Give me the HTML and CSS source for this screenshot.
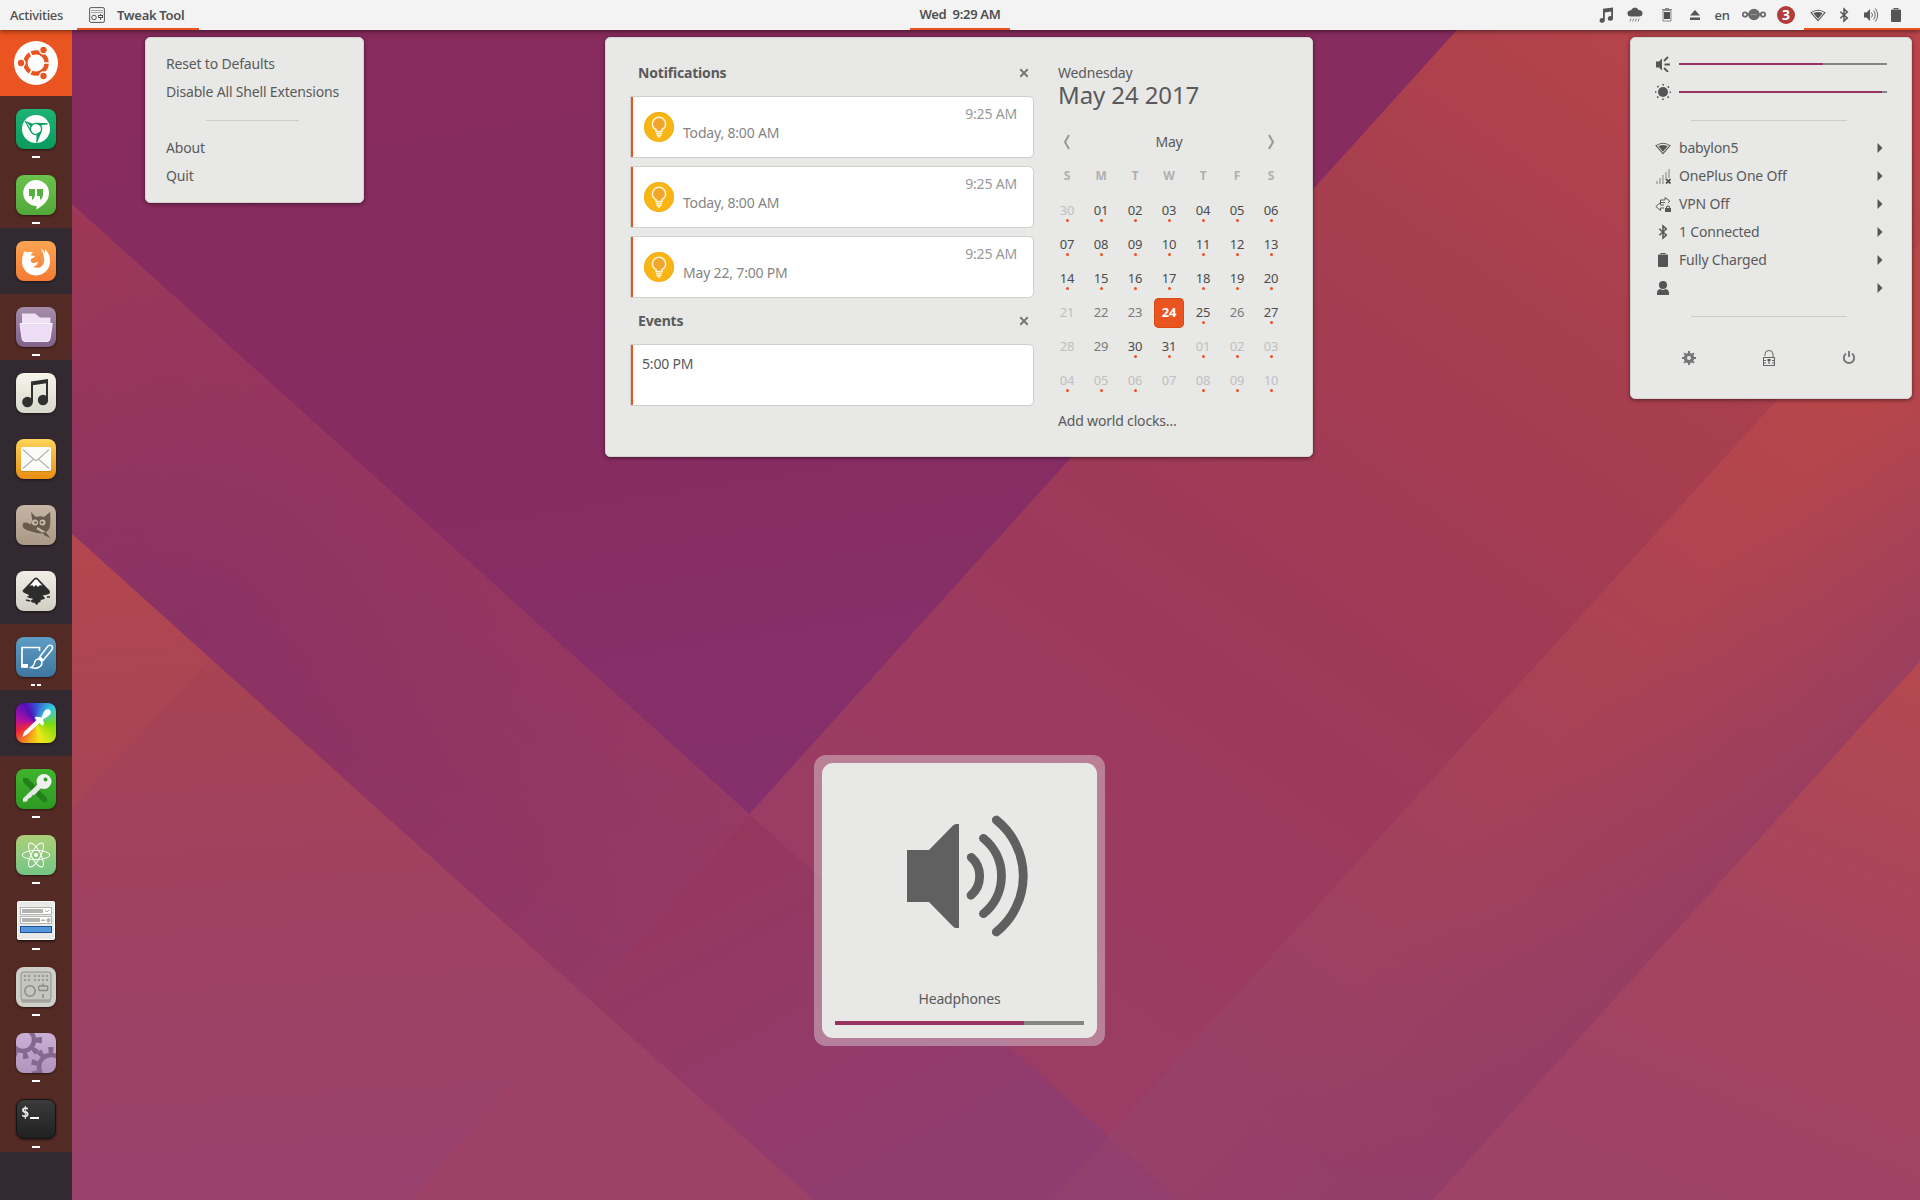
FILE: index.html
```html
<!DOCTYPE html>
<html lang="en">
<head>
<meta charset="utf-8">
<title>Desktop</title>
<link rel="stylesheet" href="styles.css">
</head>
<body>
<svg width="0" height="0" class="defs">
  <defs>
    <symbol id="bulb" viewBox="0 0 30 30"><circle cx="15" cy="15" r="15" fill="#f9b514"/><circle cx="15" cy="15" r="14.6" fill="none" stroke="#e9a91c" stroke-width=".7"/><path d="M12 19.500v-2c-2-1.200-3.600-3-3.600-5.600a6.600 6.600 0 0 1 13.200 0c0 2.600-1.600 4.400-3.600 5.600v2z" fill="#f2a52c" stroke="#fff6dc" stroke-width="1.500"/><path d="M12 21.500h6M12.500 23.500h5M14 25h2" stroke="#fff6dc" stroke-width="1.300" fill="none"/></symbol>
    <symbol id="wifi" viewBox="0 0 16 16"><path d="M1 5.600Q8 .8 15 5.600L8 13.700z" fill="none" stroke="#5c5c5c" stroke-width="1.100"/><path d="M3.400 6.300q4.600-2.600 9.200 0L8 11.800z" fill="#555"/></symbol>
    <symbol id="bt" viewBox="0 0 16 16"><path d="M4.300 4.700l7 6.200L8 14V2l3.300 3.100-7 6.200" fill="none" stroke="#555" stroke-width="1.500"/></symbol>
    <symbol id="battery" viewBox="0 0 16 16"><path d="M3 3.600q0-1 1-1h8q1 0 1 1v10.400q0 1-1 1H4q-1 0-1-1zM5.500 1h5v1h-5z" fill="#555"/></symbol>
    <symbol id="arrow" viewBox="0 0 6 10"><path d="M.5 0L5.500 5l-5 5z" fill="#555"/></symbol>
    <symbol id="cross" viewBox="0 0 10 10"><path d="M1.300 1.300l7.400 7.400m0-7.400L1.300 8.700" stroke="#777" stroke-width="2"/></symbol>
    <symbol id="note" viewBox="0 0 16 16"><path d="M5 1.800L15 .5v11a2.600 2.300 0 1 1-1.800-2.200V4.500L6.800 5.400v8a2.600 2.300 0 1 1-1.800-2.200z" fill="#555"/></symbol>
  </defs>
</svg>

<svg class="wallpaper" viewBox="0 0 1568 980" preserveAspectRatio="none">
  <defs>
    <linearGradient id="w1" gradientUnits="userSpaceOnUse" x1="500" y1="24" x2="600" y2="665"><stop offset="0" stop-color="#872c5d"/><stop offset=".5" stop-color="#872c61"/><stop offset="1" stop-color="#85306c"/></linearGradient>
    <linearGradient id="w2" gradientUnits="userSpaceOnUse" x1="360" y1="400" x2="225" y2="560"><stop offset="0" stop-color="#96365f"/><stop offset="1" stop-color="#8b3264"/></linearGradient>
    <linearGradient id="w2b" gradientUnits="userSpaceOnUse" x1="59" y1="200" x2="550" y2="740"><stop offset="0" stop-color="#a03a52" stop-opacity=".7"/><stop offset=".4" stop-color="#95355e" stop-opacity="0"/><stop offset="1" stop-color="#983d66" stop-opacity=".6"/></linearGradient>
    <linearGradient id="w3" gradientUnits="userSpaceOnUse" x1="70" y1="450" x2="90" y2="640"><stop offset="0" stop-color="#b3464e"/><stop offset="1" stop-color="#a74456"/></linearGradient>
    <linearGradient id="w4" gradientUnits="userSpaceOnUse" x1="170" y1="540" x2="200" y2="980"><stop offset="0" stop-color="#a74352"/><stop offset=".4" stop-color="#a04160"/><stop offset="1" stop-color="#98416c"/></linearGradient>
    <linearGradient id="w5" gradientUnits="userSpaceOnUse" x1="610" y1="665" x2="780" y2="980"><stop offset="0" stop-color="#95365e"/><stop offset=".6" stop-color="#933b6a"/><stop offset="1" stop-color="#8f3c70"/></linearGradient>
    <linearGradient id="w7" gradientUnits="userSpaceOnUse" x1="1430" y1="24" x2="860" y2="820"><stop offset="0" stop-color="#b9454a"/><stop offset=".28" stop-color="#a83f4e"/><stop offset=".6" stop-color="#9e3958"/><stop offset="1" stop-color="#9a3c64"/></linearGradient>
    <linearGradient id="w8" gradientUnits="userSpaceOnUse" x1="1568" y1="300" x2="1080" y2="960"><stop offset="0" stop-color="#ba4749"/><stop offset=".45" stop-color="#aa4254"/><stop offset="1" stop-color="#974068"/></linearGradient>
    <linearGradient id="w8b" gradientUnits="userSpaceOnUse" x1="1240" y1="641" x2="1370" y2="759"><stop offset="0" stop-color="#8e3b68" stop-opacity="0"/><stop offset="1" stop-color="#8e3b68" stop-opacity=".6"/></linearGradient>
    <linearGradient id="w9" gradientUnits="userSpaceOnUse" x1="1568" y1="560" x2="1400" y2="980"><stop offset="0" stop-color="#b34850"/><stop offset=".5" stop-color="#a6445e"/><stop offset="1" stop-color="#9e4266"/></linearGradient>
  </defs>
  <path d="M0 0H1568V980H0z" fill="#983b66"/>
  <path d="M0 0H1212L612 665L0 114z" fill="url(#w1)"/>
  <path d="M1212 0H1568V198L905 928L612 665z" fill="url(#w7)"/>
  <path d="M0 114L612 665L480 815L0 383z" fill="url(#w2)"/>
  <path d="M0 114L612 665L480 815L0 383z" fill="url(#w2b)"/>
  <path d="M0 383L172 538L0 724z" fill="url(#w3)"/>
  <path d="M172 538L480 815L335 980H0V724z" fill="url(#w4)"/>
  <path d="M480 815L665 980H335z" fill="#9e4167"/>
  <path d="M612 665L963 980H665L480 815z" fill="url(#w5)"/>
  <path d="M1568 198V540L1170 980H860L905 928z" fill="url(#w8)"/>
  <path d="M1568 198V540L1170 980H963L905 928z" fill="url(#w8b)"/>
  <path d="M905 928L963 980H858z" fill="#923f6e"/>
  <path d="M1568 540V980H1170z" fill="url(#w9)"/>
</svg>

<header class="topbar">
  <div class="activities">Activities</div>
  <div class="app-menu active">
    <svg width="16" height="16" viewBox="0 0 16 16" fill="none" stroke="#555"><rect x=".6" y=".6" width="14.800" height="14.800" rx="1.500"/><path d="M2.500 3.500h11M2.500 5.500h11" stroke-dasharray="1 1"/><circle cx="5" cy="10.500" r="2.300"/><rect x="9.500" y="8.500" width="4" height="2"/><path d="M11.500 7v1.500m0 2.500v2"/></svg>
    <span>Tweak Tool</span>
  </div>
  <div class="clock active">Wed&nbsp; 9:29 AM</div>
  <div class="tray">
    <span class="w28"><svg width="16" height="16"><use href="#note"/></svg></span>
    <span class="w30"><svg width="16" height="16" viewBox="0 0 16 16"><path d="M3.200 9.500a3 3 0 0 1-.5-5.900 2.500 2.500 0 0 1 1.600-.6A3.900 3.900 0 0 1 11.600 3 3.300 3.300 0 0 1 12.800 9.500z" fill="#555"/><path d="M4 11.500l-1 3M6.700 11.500l-1 3M9.400 11.500l-1 3M12.100 11.500l-1 3" stroke="#777" stroke-width=".9"/></svg></span>
    <span class="w34"><svg width="16" height="16" viewBox="0 0 16 16"><path d="M5 5h6v7H5z" fill="#505050"/><path d="M4 14V3.500h8V14z" fill="none" stroke="#888"/><path d="M3 2.500h10M6 1.500h4" stroke="#888"/></svg></span>
    <span class="w22"><svg width="16" height="16" viewBox="0 0 16 16"><path d="M8 3l5 5.500H3zM3 10.500h10v2.500H3z" fill="#555"/></svg></span>
    <span class="w32 lang">en</span>
    <span class="w32"><svg width="24" height="16" viewBox="0 0 24 16" fill="none" stroke="#6b6b6b"><circle cx="3" cy="7.500" r="2.200" stroke-width="1.800"/><circle cx="21" cy="7.500" r="2.200" stroke-width="1.800"/><circle cx="12" cy="7.500" r="5.800" fill="#6b6b6b" stroke="none"/><path d="M5 7.500h2m10 0h2" stroke-width="2"/><path d="M9 7.500h6" stroke="#aaa" stroke-dasharray="1.500 .7"/></svg></span>
    <span class="w32"><b class="badge">3</b></span>
    <div class="system active">
      <span class="w28"><svg width="16" height="16"><use href="#wifi"/></svg></span>
      <span class="w24"><svg width="16" height="16"><use href="#bt"/></svg></span>
      <span class="w30"><svg width="16" height="16" viewBox="0 0 16 16"><path d="M1 5.500h2.500L7 2v12L3.500 10.500H1z" fill="#555"/><path d="M8.500 5.500q2 2.500 0 5M10.500 3.500q3.400 4.500 0 9M12.300 1.500q4.800 6.500 0 13" fill="none" stroke="#666"/></svg></span>
      <span class="w20"><svg width="16" height="16"><use href="#battery"/></svg></span>
    </div>
  </div>
</header>

<nav class="dock">
  <div class="tile home"><svg width="44" height="44" viewBox="-22 -22 44 44"><circle r="22" fill="#fff"/><circle r="10.600" fill="none" stroke="#e95420" stroke-width="4.400"/><path d="M0 0H14M0 0L-7.500-13M0 0L-7.500 13" stroke="#fff" stroke-width="1.600"/><circle r="8.200" fill="#fff"/><g fill="#e95420" stroke="#fff" stroke-width="1.500"><circle cx="-15" r="3.900"/><circle cx="7.500" cy="-13" r="3.900"/><circle cx="7.500" cy="13" r="3.900"/></g></svg></div>

  <div class="tile on"><svg viewBox="0 0 40 40"><defs><linearGradient id="g1" x2="0" y2="1"><stop stop-color="#1db375"/><stop offset="1" stop-color="#099a5d"/></linearGradient></defs><rect width="40" height="40" rx="8" fill="url(#g1)"/><circle cx="20" cy="20" r="14" fill="#fff"/><g stroke="#0b9f62" stroke-width="1.300" fill="none"><circle cx="20" cy="20" r="5.600"/><path d="M20 14.400L31.500 15M15 22.500L9.200 12M25 22.500L20.500 33.500"/></g><path d="M9.500 12l8 3-2.500 3zM20 14.200l11 .5-7 2zM25 22l-4.500 11 0-8z" fill="#0b9f62"/></svg><i></i></div>

  <div class="tile on"><svg viewBox="0 0 40 40"><defs><linearGradient id="g2" x2="0" y2="1"><stop stop-color="#6ac24c"/><stop offset="1" stop-color="#52a93a"/></linearGradient></defs><rect width="40" height="40" rx="8" fill="url(#g2)"/><path d="M20 5a13 13 0 0 1 13 13c0 8-6 12.500-12.500 16.500V31A13 13 0 1 1 20 5z" fill="#fff"/><path d="M13 14h6v6q0 3-3 5v-4h-3zm8 0h6v6q0 3-3 5v-4h-3z" fill="#58b040"/></svg><i></i></div>

  <div class="tile"><svg viewBox="0 0 40 40"><defs><linearGradient id="g3" x2="0" y2="1"><stop stop-color="#fba552"/><stop offset="1" stop-color="#f47a32"/></linearGradient></defs><rect width="40" height="40" rx="8" fill="url(#g3)"/><path d="M7.500 12.500L8.500 10l2.500 1.500q3-1.500 6 0-2 1-2 3l4 .5q-1 2-4 3-1 4 3 4l4-1q-1 4-5 5 9 3 11-5 1-6-3-13.500 3 2 4 5V8q5 5 5 12a14 14 0 0 1-28 1q0-5 1.500-8.500z" fill="#fff"/></svg></div>

  <div class="tile on"><svg viewBox="0 0 40 40"><defs><linearGradient id="g4" x2="0" y2="1"><stop stop-color="#a58daa"/><stop offset="1" stop-color="#80628a"/></linearGradient></defs><rect width="40" height="40" rx="8" fill="url(#g4)"/><path d="M6 6.500h13l5 4h10.500V20H6z" fill="#f0e0f6"/><path d="M4 16.500h32.300l-2.200 15q-.4 3-3 3H9q-2.500 0-3-3z" fill="#ecdcf5" stroke="#fff" stroke-width=".8"/></svg><i></i></div>

  <div class="tile"><svg viewBox="0 0 40 40"><defs><linearGradient id="g5" x2="0" y2="1"><stop stop-color="#f5f5ea"/><stop offset="1" stop-color="#d8d8cb"/></linearGradient></defs><rect width="40" height="40" rx="8" fill="url(#g5)"/><path d="M16 9v20M31 7v20" stroke="#30302e" stroke-width="2" fill="none"/><path d="M15 8.500L32 6v4l-17 2.500z" fill="#30302e"/><circle cx="11.500" cy="29" r="5.300" fill="#30302e"/><circle cx="27" cy="27" r="5.200" fill="#30302e"/></svg></div>

  <div class="tile"><svg viewBox="0 0 40 40"><defs><linearGradient id="g6" x2="0" y2="1"><stop stop-color="#ffd45a"/><stop offset="1" stop-color="#e88e12"/></linearGradient></defs><rect width="40" height="40" rx="8" fill="url(#g6)"/><rect x="5" y="9" width="30" height="24" rx="1.500" fill="#b8760f" opacity=".5"/><rect x="5" y="8" width="30" height="24" rx="1.500" fill="#fbfbf9"/><path d="M7 10.500l11 10q2 2 4 0l11-10M7 29.500l10-9m6 0l10 9" fill="none" stroke="#b3b3ad" stroke-width="1.100"/></svg></div>

  <div class="tile"><svg viewBox="0 0 40 40"><defs><linearGradient id="g7" x2="0" y2="1"><stop stop-color="#c6b5a4"/><stop offset="1" stop-color="#a89885"/></linearGradient></defs><rect width="40" height="40" rx="8" fill="url(#g7)"/><path d="M15 7l5 5q4-1.500 8 0l6-5q1 10-.5 16-2 5-8 5.500-5 0-10-2-6-1.500-8.500-4-1.500-5 2.500-5 3 0 4.500 2 3-2 2-6z" fill="#685b4e"/><circle cx="19" cy="17.500" r="3" fill="#c9bcad"/><circle cx="26.500" cy="17.500" r="3" fill="#c9bcad"/><circle cx="19.500" cy="17.500" r="1.300" fill="#685b4e"/><circle cx="26" cy="17.500" r="1.300" fill="#685b4e"/><path d="M21 23l8 5" stroke="#c2b3a2" stroke-width="2.500"/><path d="M26 27l4 .5 4.500 5.500-6-2.500z" fill="#685b4e"/></svg></div>

  <div class="tile"><svg viewBox="0 0 40 40"><defs><linearGradient id="g8" x2="0" y2="1"><stop stop-color="#f1eee7"/><stop offset="1" stop-color="#d1cec4"/></linearGradient></defs><rect width="40" height="40" rx="8" fill="url(#g8)"/><path d="M18 7.500q2-2 4 0L33.500 19.500q1.500 3-2 4l-5 1q3 2 2 3.500l-4 1q1 2-2 2.500l-1 2q-2 1-2.500-1.500-4-.5-4.500-2.500 3-1 2-2-5-.5-5.500-2 4-1 0-2.500-4.500-1.500-4.500-3.500z" fill="#2d2d2d"/><path d="M19 8.700q1-1 2 0l5.500 6-2.500-.7-2 2-2-2-2.500 2-1-2-3 1z" fill="#fff"/><path d="M10 29l4 1M31 26h3" stroke="#2d2d2d" stroke-width="1.500"/></svg></div>

  <div class="tile on two"><svg viewBox="0 0 40 40"><defs><linearGradient id="g9" x2="0" y2="1"><stop stop-color="#5e9dc6"/><stop offset="1" stop-color="#3f769f"/></linearGradient></defs><rect width="40" height="40" rx="8" fill="url(#g9)"/><path d="M23.500 14v-3.500H6V29h6" fill="none" stroke="#fff" stroke-width="1.700"/><path d="M5.200 27H12v3.800H5.200z" fill="#fff"/><path d="M24 19.500L32 9q2-1.500 4 0 1 1.500 0 3.500L27 23.500zM22.500 20.500l4 3.800M23 22q-4 0-4.500 4-.5 3-3.500 4.500 5 1.500 8.500-.5 3.500-2.500 2-6z" fill="none" stroke="#fff" stroke-width="1.500"/></svg><i></i><i></i></div>

  <div class="tile"><div class="spectrum"><svg viewBox="0 0 40 40"><path d="M6.500 34l1.500-5L20.500 17l-2-2 1.500-1.500 5.500 1L28 8.500q3-3.500 6-1.500 2 3-1.500 6L27 16.500l1 4.500-1.500 2-3-3L11 31.500z" fill="#fff"/></svg></div></div>

  <div class="tile on"><svg viewBox="0 0 40 40"><defs><linearGradient id="g11" x2="0" y2="1"><stop stop-color="#3fb42e"/><stop offset="1" stop-color="#2e9a22"/></linearGradient></defs><rect width="40" height="40" rx="8" fill="url(#g11)"/><path d="M7 9h4.500L31 29v4h-4L7 13z" fill="#23801b"/><path d="M22 15L7 29.500V33l4-.5 1.500-3 2.500-1 1-2 3-1L26 18z" fill="#e7e7e7"/><circle cx="28" cy="12.500" r="7.500" fill="#f0f0f0"/><circle cx="29.500" cy="10.500" r="2" fill="#33a027"/></svg><i></i></div>

  <div class="tile on"><svg viewBox="0 0 40 40"><defs><linearGradient id="g12" x2="0" y2="1"><stop stop-color="#adcf77"/><stop offset="1" stop-color="#74c585"/></linearGradient></defs><rect width="40" height="40" rx="8" fill="url(#g12)"/><g fill="none" stroke="#fff" stroke-width="1"><ellipse cx="20" cy="20" rx="13.700" ry="4.600"/><ellipse cx="20" cy="20" rx="13.300" ry="4.600" transform="rotate(62 20 20)"/><ellipse cx="20" cy="20" rx="13.300" ry="4.600" transform="rotate(118 20 20)"/></g><circle cx="20" cy="20" r="2" fill="#fff"/></svg><i></i></div>

  <div class="tile on"><svg viewBox="0 0 40 40"><rect x="1" y="37" width="38" height="3" fill="#221310" opacity=".6"/><rect x="1.500" y=".5" width="37" height="38" rx="1" fill="#e9e9e7" stroke="#fff"/><g fill="#fff" stroke="#b5b5b2"><rect x="4.500" y="6.500" width="31" height="7"/><rect x="4.500" y="15.500" width="31" height="7"/></g><path d="M6 8h21v4H6zM6 17h18v4H6zM25 18.500h4v1.500h-4zM30.500 18h4v2.500h-4zM31.500 17h2v4.500h-2z" fill="#b3b3b0"/><path d="M29 9l2 2 2-2" stroke="#aaa" fill="none"/><rect x="4.500" y="25.500" width="31" height="6" fill="#5596dc" stroke="#1f4f98"/></svg><i></i></div>

  <div class="tile on"><svg viewBox="0 0 40 40"><rect width="40" height="40" rx="8" fill="#cfcfca"/><rect x="5" y="5" width="30" height="31" rx="3" fill="#aaaaa4"/><rect x="5" y="5" width="30" height="28" rx="2.500" fill="#c6c6c0" stroke="#92928c"/><g fill="none" stroke="#8b8b86"><path d="M8 9h7m3 0h15M8 13h7m3 0h15" stroke-width="1.600" stroke-dasharray="2 2"/><circle cx="14" cy="24" r="5.200" stroke-width="1.500"/><rect x="22.700" y="19" width="9" height="4.500" rx="1" stroke-width="1.400"/><path d="M27 16.500V19m0 8v4" stroke-width="1.600"/></g></svg><i></i></div>

  <div class="tile on"><svg viewBox="0 0 40 40"><defs><linearGradient id="g15" x2="0" y2="1"><stop stop-color="#cbb0d6"/><stop offset="1" stop-color="#b193bb"/></linearGradient><clipPath id="c15"><rect width="40" height="40" rx="8"/></clipPath></defs><g clip-path="url(#c15)"><rect width="40" height="40" fill="url(#g15)"/><g fill="none" stroke="#84688e"><circle cx="7" cy="7" r="11" stroke-width="4.500"/><circle cx="7" cy="7" r="16" stroke-width="6" stroke-dasharray="5 6" stroke-dashoffset="2"/><circle cx="35" cy="34" r="12" stroke-width="4.500"/><circle cx="35" cy="34" r="17" stroke-width="6" stroke-dasharray="5 6"/></g></g></svg><i></i></div>

  <div class="tile on"><div class="terminal"><b>$</b><u></u></div><i></i></div>
</nav>

<section class="popup app-popup">
  <div class="row">Reset to Defaults</div>
  <div class="row">Disable All Shell Extensions</div>
  <div class="row sep"></div>
  <div class="row">About</div>
  <div class="row">Quit</div>
</section>

<section class="popup date-popup">
  <div class="messages">
    <div class="heading"><h2>Notifications</h2><svg width="10" height="10"><use href="#cross"/></svg></div>
    <div class="cards">
      <article class="card"><svg width="30" height="30"><use href="#bulb"/></svg><p>Today, 8:00 AM</p><time>9:25 AM</time></article>
      <article class="card"><svg width="30" height="30"><use href="#bulb"/></svg><p>Today, 8:00 AM</p><time>9:25 AM</time></article>
      <article class="card"><svg width="30" height="30"><use href="#bulb"/></svg><p>May 22, 7:00 PM</p><time>9:25 AM</time></article>
    </div>
    <div class="heading"><h2>Events</h2><svg width="10" height="10"><use href="#cross"/></svg></div>
    <article class="card event">5:00 PM</article>
  </div>
  <div class="calendar">
    <div class="weekday">Wednesday</div>
    <div class="date">May 24 2017</div>
    <div class="month">
      <svg width="30" height="16" viewBox="0 0 30 16"><path d="M17 1l-4 7 4 7" fill="none" stroke="#999" stroke-width="2"/></svg>
      <span>May</span>
      <svg width="30" height="16" viewBox="0 0 30 16"><path d="M13 1l4 7-4 7" fill="none" stroke="#999" stroke-width="2"/></svg>
    </div>
    <div class="names"><b>S</b><b>M</b><b>T</b><b>W</b><b>T</b><b>F</b><b>S</b></div>
    <div class="days">
      <span class="out ev">30</span><span class="ev">01</span><span class="ev">02</span><span class="ev">03</span><span class="ev">04</span><span class="ev">05</span><span class="ev">06</span>
      <span class="ev">07</span><span class="ev">08</span><span class="ev">09</span><span class="ev">10</span><span class="ev">11</span><span class="ev">12</span><span class="ev">13</span>
      <span class="ev">14</span><span class="ev">15</span><span class="ev">16</span><span class="ev">17</span><span class="ev">18</span><span class="ev">19</span><span class="ev">20</span>
      <span class="out">21</span><span class="free">22</span><span class="free">23</span><span class="today">24</span><span class="ev">25</span><span class="free">26</span><span class="ev">27</span>
      <span class="out">28</span><span class="free">29</span><span class="ev">30</span><span class="ev">31</span><span class="out ev">01</span><span class="out ev">02</span><span class="out ev">03</span>
      <span class="out ev">04</span><span class="out ev">05</span><span class="out ev">06</span><span class="out">07</span><span class="out ev">08</span><span class="out ev">09</span><span class="out ev">10</span>
    </div>
    <div class="clocks">Add world clocks…</div>
  </div>
</section>

<section class="popup system-popup">
  <div class="row"><svg width="16" height="16" viewBox="0 0 16 16"><path d="M1 5.500h3L7 2.500v12L4 11.500H1z" fill="#555"/><path d="M9 5l4-4M9.500 8.500H15M9 12l4 4" stroke="#555" stroke-width="1.800"/></svg><div class="slider"><div style="width:69%"></div></div></div>
  <div class="row"><svg width="16" height="16" viewBox="0 0 16 16"><circle cx="8" cy="8" r="5" fill="#555"/><circle cx="8" cy="8" r="7.300" fill="none" stroke="#555" stroke-width="1.500" stroke-dasharray="1.700 4.033" stroke-dashoffset=".85"/></svg><div class="slider"><div style="width:97.400%"></div></div></div>
  <div class="row sep"></div>
  <div class="row"><svg width="16" height="16"><use href="#wifi"/></svg><span>babylon5</span><svg width="6" height="10"><use href="#arrow"/></svg></div>
  <div class="row"><svg width="16" height="16" viewBox="0 0 16 16"><path d="M1 13h2v3H1zM4 10h2v6H4zM7 7h2v9H7zM10 4h2v7h-2zM13 1h2v9h-2z" fill="#b4b4b2"/><path d="M11 11l4.500 4.500m0-4.500L11 15.500" stroke="#444" stroke-width="1.700"/></svg><span>OnePlus One Off</span><svg width="6" height="10"><use href="#arrow"/></svg></div>
  <div class="row"><svg width="16" height="16" viewBox="0 0 16 16"><path d="M5.500 4H10V1.500L14.800 5 13 7M9 12H5.500v2.500L.8 10.500l4.700-4V9H9M5.500 4v2.500H10" fill="none" stroke="#5a5a5a" stroke-width="1"/><path d="M10 12h6v4h-6z" fill="#555"/><path d="M11.500 12.500V11q1.500-2 3 0v1.500" fill="none" stroke="#555" stroke-width="1.100"/></svg><span>VPN Off</span><svg width="6" height="10"><use href="#arrow"/></svg></div>
  <div class="row"><svg width="16" height="16"><use href="#bt"/></svg><span>1 Connected</span><svg width="6" height="10"><use href="#arrow"/></svg></div>
  <div class="row"><svg width="16" height="16"><use href="#battery"/></svg><span>Fully Charged</span><svg width="6" height="10"><use href="#arrow"/></svg></div>
  <div class="row"><svg width="16" height="16" viewBox="0 0 16 16"><circle cx="8" cy="5" r="4" fill="#555"/><path d="M2 15v-2q0-3.500 3.500-4Q8 11 10.500 9q3.500.5 3.500 4v2z" fill="#555"/></svg><span></span><svg width="6" height="10"><use href="#arrow"/></svg></div>
  <div class="row sep"></div>
  <div class="actions">
    <svg width="16" height="16" viewBox="-8 -8 16 16" fill="none" stroke="#777"><circle r="3.600" stroke-width="3.200"/><path d="M0-7v3M0 7V4M-7 0h3M7 0H4M-4.900-4.900l2 2M4.900 4.900l-2-2M-4.900 4.900l2-2M4.900-4.900l-2 2" stroke-width="2"/></svg>
    <svg width="14" height="18" viewBox="0 0 14 18" fill="none" stroke="#666"><rect x="1.500" y="8.500" width="11" height="8"/><path d="M3 7V5q0-3.500 4-3.500T11 5v3" /><path d="M2 11.500h2m6 0h2M2 14h2m6 0h2"/><path d="M5.500 10h3v2h-1v3h-1v-3h-1z" fill="#555" stroke="none"/></svg>
    <svg width="16" height="16" viewBox="0 0 16 16" fill="none" stroke="#777" stroke-width="1.900"><path d="M5 3.600a5.200 5.200 0 1 0 6 0M8 1v6"/></svg>
  </div>
</section>

<section class="osd">
  <div class="osd-body">
    <svg width="138" height="122" viewBox="91 75 138 122"><path d="M107 110h22l24-24.500q1.500-1.500 3-1.500h3v104h-3q-1.500 0-3-1.500L129 162h-22z" fill="#606060"/><g fill="none" stroke="#606060" stroke-width="8.800" stroke-linecap="round"><path d="M171.300 117.300A25.500 25.500 0 0 1 171 155.300M183.500 98.300A48.500 48.500 0 0 1 183.500 173.700M196.300 80A71.600 71.600 0 0 1 196.300 192"/></g></svg>
    <div class="osd-label">Headphones</div>
    <div class="level"><div style="width:75.900%"></div></div>
  </div>
</section>
</body>
</html>
```
FILE: styles.css
```css
* { box-sizing: border-box; }
body {
  margin: 0;
  width: 1920px;
  height: 1200px;
  overflow: hidden;
  position: relative;
  font: 14px/20px "Noto Sans", "Open Sans", sans-serif;
  letter-spacing: -0.18px;
  color: #5a5a5a;
  background: #953a66;
}
svg { display: block; flex: none; }
h2, p { margin: 0; }
.defs { position: absolute; }
.wallpaper { position: absolute; left: 0; top: 0; width: 1920px; height: 1200px; z-index: -1; }

/* top bar */
.topbar {
  position: relative;
  display: flex;
  justify-content: space-between;
  height: 30px;
  background: #f3f3f3;
  font-size: 13px;
  font-weight: 500;
  line-height: 30px;
  letter-spacing: -0.3px;
  color: #505050;
  box-shadow: 0 1px 5px rgba(0, 0, 0, .55);
}
.activities { width: 77px; padding-left: 10px; }
.active { box-shadow: inset 0 -2px #e95420; }
.app-menu { display: flex; align-items: center; gap: 12px; width: 122px; padding-left: 12px; margin-right: auto; font-weight: 600; }
.clock { position: absolute; left: 910px; width: 100px; height: 30px; line-height: 28px; text-align: center; font-weight: 600; }
.tray, .system { display: flex; align-items: center; height: 30px; }
.tray span { display: flex; justify-content: center; }
.tray .w20 { width: 20px; }
.tray .w22 { width: 22px; }
.tray .w24 { width: 24px; }
.tray .w28 { width: 28px; }
.tray .w30 { width: 30px; }
.tray .w32 { width: 32px; }
.tray .w34 { width: 34px; }
.system { margin-left: 2px; padding-right: 14px; }
.badge { width: 18px; height: 18px; border-radius: 50%; background: #b23b3c; color: #fff; line-height: 18px; text-align: center; font-size: 14px; letter-spacing: 0; }

/* dock */
.dock { width: 72px; height: 1170px; background: #332931; }
.tile { display: flex; flex-wrap: wrap; justify-content: center; align-content: flex-start; column-gap: 2px; width: 72px; height: 66px; padding: 13px 10px 0; }
.tile > svg, .spectrum, .terminal { width: 40px; height: 40px; margin: 0 6px 7px; filter: drop-shadow(0 1px 1px rgba(0, 0, 0, .5)); }
.tile.on { background: #542b24; }
.tile.home { background: #e95420; padding-top: 11px; }
.tile.home > svg { width: 44px; height: 44px; margin: 0; filter: none; }
.tile i { width: 8px; height: 2px; background: #fff; }
.tile.two i { width: 4px; }
.spectrum { border-radius: 8px; background: conic-gradient(#3a4fd0, #35c6e0 45deg, #7ddc10 95deg, #f0e818 165deg, #f6a71c 200deg, #ee2738 245deg, #b511a0 280deg, #5210b8 330deg, #3a4fd0); }
.terminal { display: flex; border-radius: 8px; background: linear-gradient(#3b3b3b, #202020); border: 1px solid #151515; color: #eee; padding: 4px 0 0 4px; gap: 1px; }
.terminal b { font: bold 14px/16px "DejaVu Sans Mono", monospace; }
.terminal u { width: 9px; height: 2px; background: #fff; margin-top: 13px; }

/* popups */
.popup { position: absolute; top: 37px; background: #e8e8e6; border-radius: 5px; border: 1px solid #d3d3d1; box-shadow: 0 1px 4px rgba(0, 0, 0, .5); }
.row { display: flex; align-items: center; height: 28px; }
.sep::before { content: ""; display: block; height: 1px; background: #cbcbc9; }
.app-popup { left: 145px; width: 219px; height: 166px; padding: 12px 20px; }
.app-popup .sep::before { width: 93px; margin-left: 40px; }

.date-popup { left: 605px; width: 708px; height: 420px; padding: 12px 24px; display: flex; gap: 18px; }
.messages { width: 404px; }
.heading { display: flex; align-items: center; justify-content: space-between; height: 46px; padding: 0 5px 0 8px; }
.heading h2 { font-size: 14px; font-weight: 700; }
.cards { display: flex; flex-direction: column; gap: 8px; }
.card { display: flex; align-items: center; height: 62px; padding: 0 16px 0 13px; background: #fff; border: 1px solid #cfcfcc; border-radius: 0 5px 5px 0; box-shadow: inset 2px 0 #e95420; color: #8a8a8a; }
.card p { margin: 12px auto 0 9px; color: #858585; }
.card time { margin-bottom: 26px; color: #999; }
.card.event { padding: 0 0 22px 11px; color: #5a5a5a; }

.calendar { width: 234px; padding-top: 13px; }
.weekday { padding-left: 6px; height: 20px; }
.date { padding-left: 6px; font-size: 24px; line-height: 24px; letter-spacing: -0.1px; }
.month { display: flex; align-items: center; justify-content: space-between; height: 30px; margin: 20px 0 4px; }
.names, .days { display: grid; grid-template-columns: repeat(7, 30px); gap: 4px; text-align: center; font-size: 13px; line-height: 28px; }
.names { height: 30px; margin-bottom: 5px; line-height: 30px; font-size: 12px; color: #b0b0ae; }
.days span { position: relative; height: 30px; color: #4c4c4c; }
.days .out { color: #c0c0be; }
.days .free { color: #7c7c7c; }
.days .today { background: #e95420; box-shadow: inset 0 0 0 1px #d84a18; border-radius: 5px; color: #fff; font-weight: 700; }
.ev::after { content: ""; position: absolute; left: 14px; top: 23px; width: 3px; height: 3px; border-radius: 50%; background: #e95420; }
.clocks { padding: 15px 0 0 6px; }

.system-popup { left: 1630px; width: 282px; height: 362px; padding: 12px 24px; }
.system-popup .row { gap: 8px; }
.system-popup .row span { flex: 1; }
.system-popup .row > svg:last-child { margin-right: 4px; }
.system-popup .sep::before { width: 156px; margin-left: 36px; }
.slider { width: 208px; height: 2px; background: #868686; }
.slider div, .level div { height: 100%; background: #973361; }
.actions { display: flex; justify-content: space-between; align-items: center; height: 56px; padding: 0 30px 0 26px; }

.osd { position: absolute; left: 814px; top: 755px; width: 291px; height: 291px; padding: 8px; border-radius: 12px; background: rgba(232, 232, 230, .4); }
.osd-body { display: flex; flex-direction: column; align-items: center; height: 275px; padding: 52px 13px 13px; border-radius: 11px; background: #e8e8e6; }
.osd-label { margin: 52px 0 12px; }
.level { width: 249px; height: 4px; background: #858882; }
```
